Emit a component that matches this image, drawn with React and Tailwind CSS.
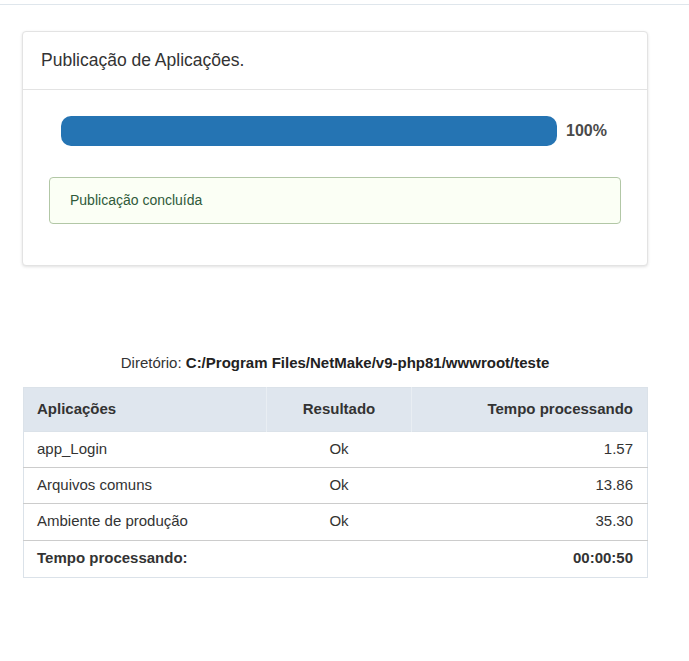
export default function App() {
  const rows = [
    { app: 'app_Login', res: 'Ok', time: '1.57', h: 'h-[36px]' },
    { app: 'Arquivos comuns', res: 'Ok', time: '13.86', h: 'h-[36px]' },
    { app: 'Ambiente de produção', res: 'Ok', time: '35.30', h: 'h-[37px]' },
  ];

  return (
    <div className="min-h-[661px] bg-white text-[#333] font-['Liberation_Sans',Arial,sans-serif]">
      {/* top rule */}
      <div className="h-[5px] border-b border-[#dfe6ec]" />

      <div className="pl-[22px] pr-[42px] pt-[26px]">
        {/* Card */}
        <div className="w-[626px] bg-white border border-[#e3e3e3] rounded-[4px] shadow-[0_1px_3px_rgba(0,0,0,0.12)]">
          <div className="h-[58px] flex items-center px-[18px] border-b border-[#e3e3e3]">
            <h2 className="text-[17.5px] text-[#333]">Publicação de Aplicações.</h2>
          </div>
          <div className="px-[26px] pt-[26px] pb-[41px]">
            <div className="flex items-center pl-3">
              <div className="w-[496px] h-[30px] rounded-[10px] bg-[#2574b3]" />
              <span className="ml-[9px] text-[16px] font-bold text-[#4a4a4a]">100%</span>
            </div>
            <div className="mt-[31px] h-[47px] flex items-center px-5 bg-[#fbfff5] border border-[#b2c7a6] rounded-[4px]">
              <span className="text-[14px] text-[#2f5a3a]">Publicação concluída</span>
            </div>
          </div>
        </div>

        {/* Directory */}
        <p className="mt-[86px] w-[626px] text-center text-[15px] text-[#333]">
          Diretório: <span className="font-bold text-[#222]">C:/Program Files/NetMake/v9-php81/wwwroot/teste</span>
        </p>

        {/* Table */}
        <table className="mt-[12px] ml-px w-[625px] border-collapse border border-[#dbe2e9] text-[15px]">
          <thead>
            <tr className="bg-[#dfe6ee] h-[44px] border-b border-[#dbe2e9]">
              <th className="w-[243px] text-left font-bold pl-[13px] border-r border-[#e9eef3]">Aplicações</th>
              <th className="w-[145px] text-center font-bold border-r border-[#e9eef3]">Resultado</th>
              <th className="text-right font-bold pr-[14px]">Tempo processando</th>
            </tr>
          </thead>
          <tbody>
            {rows.map((r) => (
              <tr key={r.app} className={`${r.h} border-b border-[#cccccc]`}>
                <td className="pl-[13px]">{r.app}</td>
                <td className="text-center">{r.res}</td>
                <td className="text-right pr-[14px]">{r.time}</td>
              </tr>
            ))}
            <tr className="h-[37px]">
              <td className="pl-[13px] font-bold">Tempo processando:</td>
              <td />
              <td className="text-right pr-[14px] font-bold">00:00:50</td>
            </tr>
          </tbody>
        </table>
      </div>
    </div>
  );
}
